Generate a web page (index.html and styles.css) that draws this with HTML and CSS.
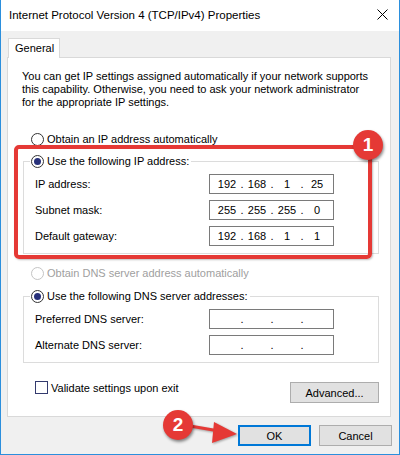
FILE: index.html
```html
<!DOCTYPE html>
<html lang="en">
<head>
    <meta charset="UTF-8">
    <meta name="viewport" content="width=device-width, initial-scale=1.0">
    <title>Internet Protocol Version 4 (TCP/IPv4) Properties</title>
    <link rel="stylesheet" href="styles.css">
</head>
<body>
<div class="window">
    <div class="titlebar">
        <span class="title">Internet Protocol Version 4 (TCP/IPv4) Properties</span>
        <svg class="close" width="11" height="11" viewBox="0 0 11 11">
            <path d="M0.5 0.5 L10.5 10.5 M10.5 0.5 L0.5 10.5" stroke="#000" stroke-width="1" fill="none"/>
        </svg>
    </div>

    <div class="content">
        <div class="tabs">
            <div class="tab">General</div>
        </div>

        <div class="panel">
            <p class="intro">You can get IP settings assigned automatically if your network supports<br>this capability. Otherwise, you need to ask your network administrator<br>for the appropriate IP settings.</p>

            <div class="option"><span class="radio"></span>Obtain an IP address automatically</div>

            <div class="group">
                <div class="legend"><span class="radio checked"></span>Use the following IP address:</div>
                <div class="field-row">
                    <span class="label">IP address:</span>
                    <div class="ip"><span>192</span><i>.</i><span>168</span><i>.</i><span>1</span><i>.</i><span>25</span></div>
                </div>
                <div class="field-row">
                    <span class="label">Subnet mask:</span>
                    <div class="ip"><span>255</span><i>.</i><span>255</span><i>.</i><span>255</span><i>.</i><span>0</span></div>
                </div>
                <div class="field-row">
                    <span class="label">Default gateway:</span>
                    <div class="ip"><span>192</span><i>.</i><span>168</span><i>.</i><span>1</span><i>.</i><span>1</span></div>
                </div>
            </div>

            <div class="option disabled"><span class="radio"></span>Obtain DNS server address automatically</div>

            <div class="group dns">
                <div class="legend"><span class="radio checked"></span>Use the following DNS server addresses:</div>
                <div class="field-row">
                    <span class="label">Preferred DNS server:</span>
                    <div class="ip"><span></span><i>.</i><span></span><i>.</i><span></span><i>.</i><span></span></div>
                </div>
                <div class="field-row">
                    <span class="label">Alternate DNS server:</span>
                    <div class="ip"><span></span><i>.</i><span></span><i>.</i><span></span><i>.</i><span></span></div>
                </div>
            </div>

            <div class="bottom-row">
                <div class="check"><span class="box"></span>Validate settings upon exit</div>
                <button class="btn advanced">Advanced...</button>
            </div>
        </div>

        <div class="footer">
            <button class="btn ok">OK</button>
            <button class="btn">Cancel</button>
        </div>
    </div>

    <!-- annotations drawn over the dialog -->
    <div class="highlight"></div>
    <div class="badge badge-1">1</div>
    <svg class="arrow" width="400" height="455" viewBox="0 0 400 455">
        <line x1="190" y1="426" x2="222" y2="431.5" stroke="#e53935" stroke-width="3"/>
        <polygon points="237,434 214,422 212,443" fill="#e53935"/>
    </svg>
    <div class="badge badge-2">2</div>
</div>
</body>
</html>
```

FILE: styles.css
```css
body {
    margin: 0;
    font-family: "Liberation Sans", Arial, sans-serif;
    font-size: 11px;
    color: #000;
    background: #f0f0f0;
}
.window {
    position: relative;
    width: 400px;
    height: 455px;
    box-sizing: border-box;
    background: #f0f0f0;
    border: 1px solid #2b8fdd;
    border-top: none;
    overflow: hidden;
}
.titlebar {
    height: 31px;
    background: #fff;
    display: flex;
    align-items: center;
    justify-content: space-between;
    padding: 0 11px 0 8px;
}
.title {
    font-size: 11.5px;
    margin-top: -2px;
}
.close {
    margin-top: -3px;
}
.content {
    padding: 7px 0 0 6px;
}
.tabs {
    display: flex;
}
.tab {
    position: relative;
    z-index: 1;
    width: 52px;
    height: 20px;
    box-sizing: border-box;
    margin: 0 0 -1px 1px;
    padding: 3px 0 0 6px;
    background: #fff;
    border: 1px solid #d9d9d9;
    border-bottom: none;
}
.panel {
    width: 384px;
    height: 360px;
    box-sizing: border-box;
    background: #fff;
    border: 1px solid #d9d9d9;
    padding-top: 12px;
}
.intro {
    margin: 0 0 0 14px;
    line-height: 13px;
}
.option {
    display: flex;
    align-items: center;
    height: 16px;
    margin: 22px 0 0 23px;
}
.option.disabled {
    margin-top: 11px;
    color: #a0a0a0;
}
.option.disabled .radio {
    border-color: #c4c4c4;
}
.radio {
    width: 13px;
    height: 13px;
    box-sizing: border-box;
    border: 1px solid #333;
    border-radius: 50%;
    margin-right: 3px;
    display: flex;
    align-items: center;
    justify-content: center;
    background: #fff;
}
.radio.checked::after {
    content: "";
    width: 7px;
    height: 7px;
    border-radius: 50%;
    background: #27307a;
}
.group {
    margin: 14px 0 0 15px;
    width: 356px;
    box-sizing: border-box;
    border: 1px solid #dcdcdc;
    padding-bottom: 7px;
}
.group.dns {
    margin-top: 15px;
}
.legend {
    display: flex;
    align-items: center;
    width: fit-content;
    height: 16px;
    margin: -9px 0 0 6px;
    padding: 0 2px 0 1px;
    background: #fff;
}
.field-row {
    display: flex;
    align-items: center;
    height: 20px;
    margin-top: 6px;
    padding-left: 11px;
}
.legend + .field-row {
    margin-top: 5px;
}
.label {
    width: 174px;
}
.ip {
    width: 125px;
    height: 20px;
    box-sizing: border-box;
    border: 1px solid #7a7a7a;
    padding-left: 5px;
    display: flex;
    line-height: 18px;
}
.ip span {
    width: 24px;
    text-align: center;
}
.ip i {
    font-style: normal;
    width: 6px;
    text-align: center;
}
.bottom-row {
    display: flex;
    justify-content: space-between;
    align-items: flex-start;
    margin: 19px 11px 0 27px;
}
.check {
    display: flex;
    align-items: center;
    height: 13px;
    margin-top: -1px;
}
.box {
    width: 13px;
    height: 13px;
    box-sizing: border-box;
    border: 1px solid #333a6e;
    margin-right: 3px;
}
.btn {
    font-family: inherit;
    font-size: 11px;
    color: #000;
    width: 73px;
    height: 21px;
    padding: 0;
    background: #e1e1e1;
    border: 1px solid #adadad;
}
.advanced {
    width: 89px;
}
.ok {
    border: 2px solid #0078d7;
}
.footer {
    display: flex;
    justify-content: flex-end;
    gap: 8px;
    padding: 8px 7px 0 0;
}
.highlight {
    position: absolute;
    left: 13px;
    top: 145px;
    width: 358px;
    height: 114px;
    box-sizing: border-box;
    border: 4px solid #e53935;
    border-radius: 5px;
    box-shadow: 1px 1px 2px rgba(0, 0, 0, 0.25);
}
.badge {
    position: absolute;
    width: 30px;
    height: 30px;
    border-radius: 50%;
    background: #e53935;
    color: #fff;
    font-weight: bold;
    font-size: 19px;
    display: flex;
    align-items: center;
    justify-content: center;
    box-shadow: 1px 2px 3px rgba(0, 0, 0, 0.45);
}
.badge-1 {
    left: 352px;
    top: 130px;
}
.badge-2 {
    left: 162px;
    top: 410px;
}
.arrow {
    position: absolute;
    left: -1px;
    top: 0;
    filter: drop-shadow(1px 1px 1px rgba(0, 0, 0, 0.35));
}
```
